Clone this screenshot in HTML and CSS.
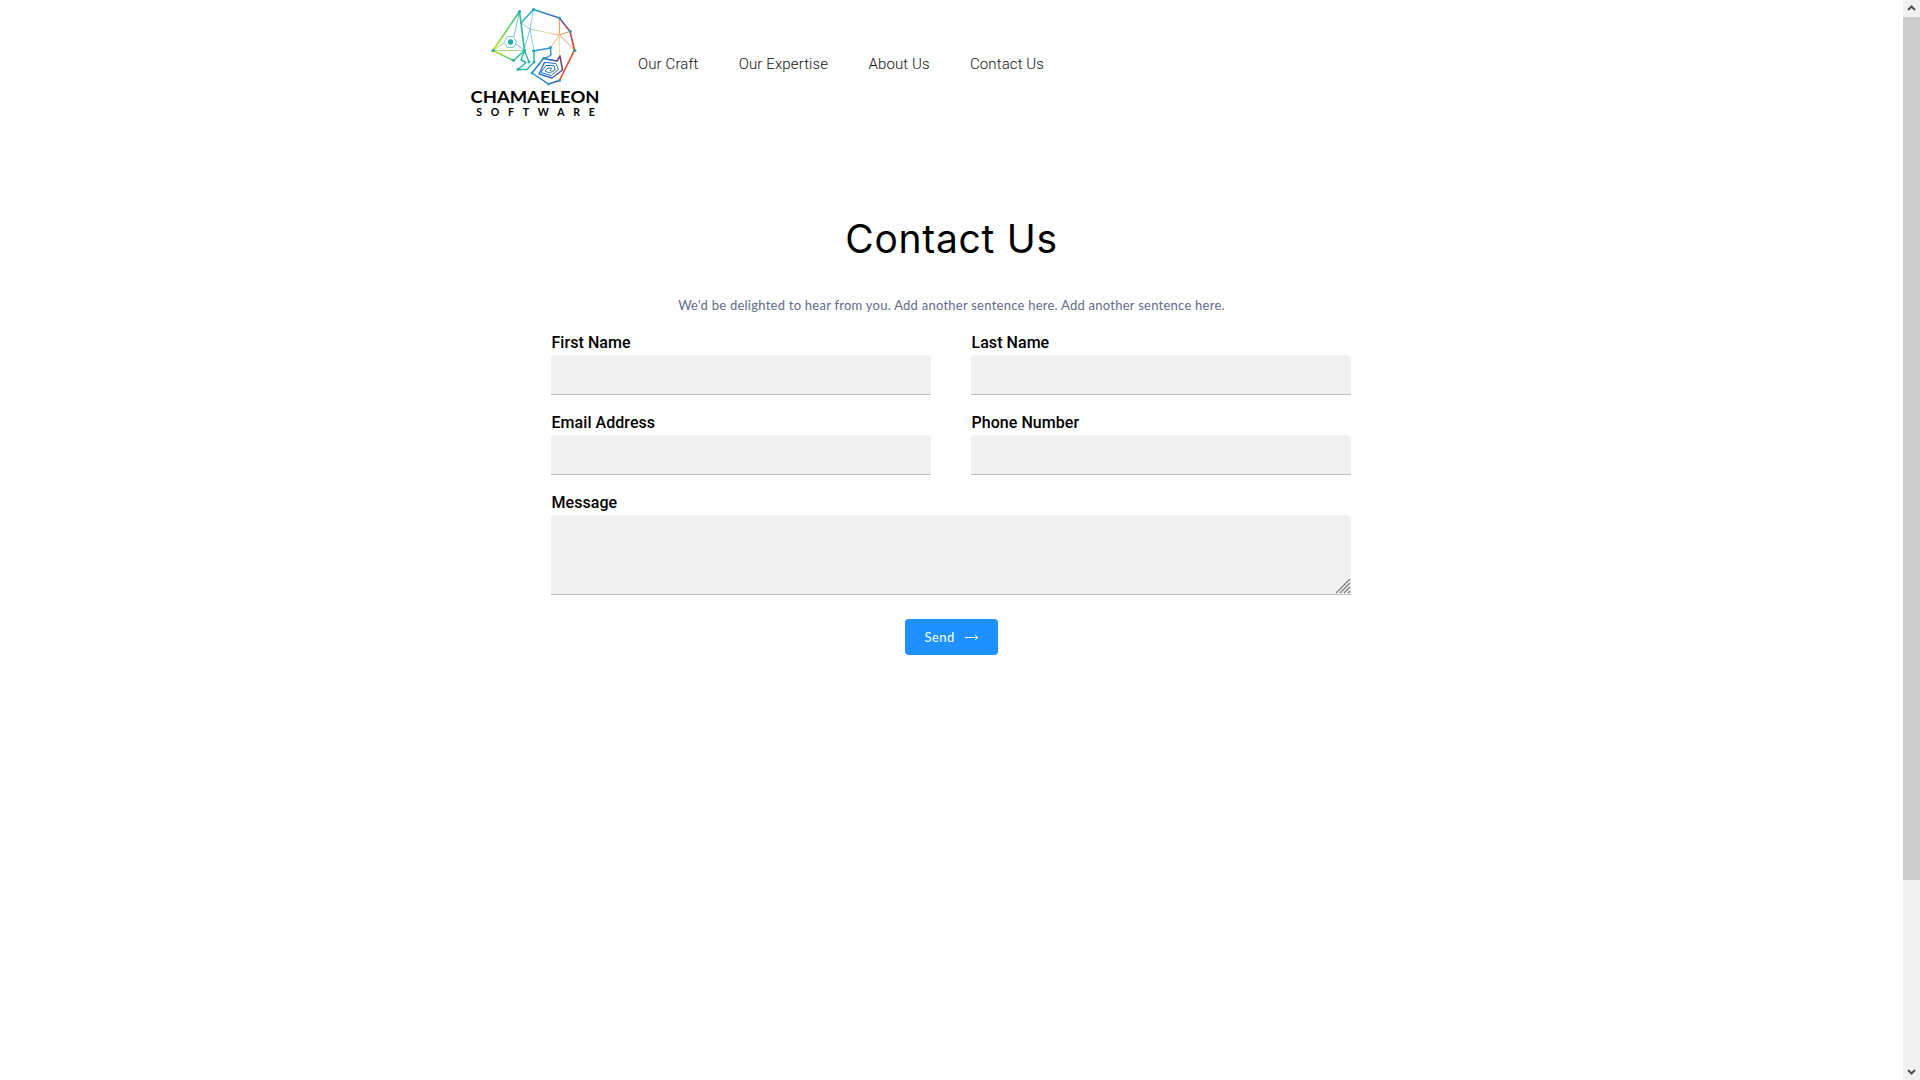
FILE: index.html
```html
<!DOCTYPE html>
<html lang="en">
<head>
<meta charset="utf-8">
<title>Contact Us</title>
<link rel="stylesheet" href="styles.css">
</head>
<body>
<div class="page">
<header class="header">
<svg class="logo" width="130" height="125" viewBox="0 0 130 125">
  <defs>
    <linearGradient id="head" gradientUnits="userSpaceOnUse" x1="22" y1="40" x2="55" y2="40"><stop offset="0" stop-color="#c8e010"/><stop offset=".5" stop-color="#5cd268"/><stop offset="1" stop-color="#1fb59b"/></linearGradient>
    <linearGradient id="back" gradientUnits="userSpaceOnUse" x1="45" y1="10" x2="106" y2="50"><stop offset="0" stop-color="#35c9a3"/><stop offset=".3" stop-color="#2e91dc"/><stop offset=".58" stop-color="#5360ad"/><stop offset=".75" stop-color="#a04450"/><stop offset="1" stop-color="#e2481c"/></linearGradient>
    <linearGradient id="inner" gradientUnits="userSpaceOnUse" x1="56" y1="30" x2="92" y2="36"><stop offset="0" stop-color="#79c5dd"/><stop offset=".6" stop-color="#ece28b"/><stop offset="1" stop-color="#f38b58"/></linearGradient>
    <linearGradient id="tail" gradientUnits="userSpaceOnUse" x1="60" y1="70" x2="93" y2="62"><stop offset="0" stop-color="#1e8fdb"/><stop offset=".6" stop-color="#3b60b6"/><stop offset="1" stop-color="#793b65"/></linearGradient>
  </defs>
  <g transform="translate(-1 0)">
  <g fill="none" stroke-linejoin="round" stroke-linecap="round">
    <path d="M51 23L60 29L63.500 9.500M60 29L64 51M60 29L54 50" stroke="#86c9e3"/>
    <path d="M60 29L89.500 35.200L80.500 47.500M89.500 35L100 31.500M89.500 35L104.500 50" stroke="url(#inner)"/>
    <path d="M89.500 18V35" stroke="#f49a66" stroke-width="1.200"/>
    <path d="M89.500 35V57" stroke="#eae39b" stroke-width="1.200"/>
    <path d="M49.500 11.500L44 36M54 50L46 44" stroke="#82b5e6"/>
    <path d="M23 50.500L49.500 11.500L54.500 50.500L43.500 60.500Z" stroke="url(#head)" stroke-width="1.600"/>
    <path d="M23 50.500L34 43M23 50.500H54" stroke="#9cdc80"/>
    <path d="M34.500 42L37.500 36.500H43.500L46.500 42L43.500 47.500H37.500Z" stroke="#78c6de"/>
    <path d="M51 23L63.500 9.500L89.500 18L100 31.500L104.500 50L89.500 80.500" stroke="url(#back)" stroke-width="1.600"/>
    <path d="M54.500 50.500L59 62M54.500 50.500L51 60L56 62.500L48 69.500H57L64 62V51" stroke="#25b8a3" stroke-width="1.400"/>
    <path d="M63.500 51L80.500 48L81 55L77 57.500L73.500 58" stroke="#2b90d8" stroke-width="1.400"/>
    <path d="M89.500 80.500L78.500 84L62 73L73.500 58.500L87 61L90 56L92.500 70L82 78L69 74L74.500 62.500" stroke="url(#tail)" stroke-width="1.500"/>
    <path d="M74.500 62.500L86 63.500L88.500 69.500L81 75.500L71 72.500L76 65.500H84L85 70L79.500 73L75 71L78 68H81.500L80 71" stroke="#2874c4" stroke-width="1"/>
  </g>
  <g fill="#23a8b1"><circle cx="40.500" cy="42" r="2.700"/><circle cx="23" cy="50.500" r="1.500"/><circle cx="49.500" cy="11.500" r="1.500"/><circle cx="63.500" cy="9.500" r="1.500"/><circle cx="89.500" cy="18" r="1.500"/><circle cx="100.500" cy="31.500" r="1.500"/><circle cx="105" cy="50.500" r="1.500"/><circle cx="54.500" cy="50.500" r="1.400"/><circle cx="43.500" cy="60.500" r="1.400"/><circle cx="59" cy="62" r="1.400"/><circle cx="64" cy="62" r="1.400"/><circle cx="48" cy="69.500" r="1.400"/><circle cx="63.500" cy="51" r="1.400"/><circle cx="80.500" cy="47.500" r="1.500"/><circle cx="73.500" cy="58.500" r="1.400"/><circle cx="62" cy="73" r="1.400"/><circle cx="78.500" cy="84" r="1.500"/><circle cx="89.500" cy="80.500" r="1.500"/></g>
  </g>
  <text class="brand" x="-0.500" y="102.600" textLength="129" lengthAdjust="spacingAndGlyphs">CHAMAELEON</text>
  <text class="brand-sub" x="5.300" y="115.600" textLength="118.500">SOFTWARE</text>
</svg>
<nav class="nav"><a>Our Craft</a><a>Our Expertise</a><a>About Us</a><a>Contact Us</a></nav>
</header>
<main class="contact">
<h1 class="title">Contact Us</h1>
<p class="intro">We'd be delighted to hear from you. Add another sentence here. Add another sentence here.</p>
<form class="form">
<label class="field"><span>First Name</span><input type="text"></label>
<label class="field"><span>Last Name</span><input type="text"></label>
<label class="field"><span>Email Address</span><input type="text"></label>
<label class="field"><span>Phone Number</span><input type="text"></label>
<label class="field wide"><span>Message</span><div class="area"><textarea></textarea><svg class="grip" width="15" height="15" viewBox="0 0 15 15" stroke="#777" stroke-width="1.200"><path d="M0 14L14 0M4 14L14 4M8 14L14 8M12 14L14 12"/></svg></div></label>
<button class="send" type="button"><span>Send</span><svg width="14" height="8" viewBox="0 0 14 8" fill="none" stroke="#fff"><path d="M0 4.500H13M10 2L12.500 4.500L10 7"/></svg></button>
</form>
</main>
</div>
<div class="scrollbar"><svg width="17" height="17" viewBox="0 0 17 17"><path d="M5 10L8.500 6.500L12 10" fill="none" stroke="#505050" stroke-width="2"/></svg><div class="thumb"></div><svg class="down" width="17" height="17" viewBox="0 0 17 17"><path d="M5 7L8.500 10.500L12 7" fill="none" stroke="#505050" stroke-width="2"/></svg></div>
</body>
</html>
```
FILE: styles.css
```css
* { box-sizing: border-box; }
body { margin: 0; height: 1080px; display: flex; overflow: hidden; background: #fff; color: #000; font-family: Lato, sans-serif; }
.page { flex: 1; padding-right: 1px; }
.header { display: flex; height: 125px; padding-left: 471px; }
.logo { flex: none; overflow: visible; }
.brand { font: 700 17px Lato, sans-serif; }
.brand-sub { font: 700 10.5px Lato, sans-serif; }
.nav { display: flex; gap: 40.300px; margin-left: 37px; padding-top: 54px; font: 300 15px/20px Roboto, sans-serif; letter-spacing: 0.110px; color: #111; white-space: nowrap; }
.contact { width: 800px; margin: 0 auto; }
.title { margin: 0; padding: 85px 0 0 1px; font: 400 39px/58px Inter, sans-serif; letter-spacing: 0.700px; text-align: center; }
.intro { margin: 27px 0 0; padding-left: 1px; font-size: 13px; line-height: 20px; letter-spacing: 0.250px; text-align: center; color: #5f6b8c; white-space: nowrap; }
.form { display: grid; grid-template-columns: 1fr 1fr; column-gap: 40px; row-gap: 16px; margin-top: 16px; }
.field { display: block; height: 64px; }
.field span { display: block; height: 24px; padding-left: 0.500px; font: 500 16px/23px Roboto, sans-serif; letter-spacing: 0.050px; }
.field input, .field textarea { display: block; width: 100%; height: 40px; border: 0; border-bottom: 1px solid #bdbdbd; border-radius: 4px 4px 0 0; background: #f1f1f1; resize: none; outline: 0; }
.wide { grid-column: span 2; height: 104px; }
.area { position: relative; }
.field textarea { height: 80px; }
.grip { position: absolute; right: 0; bottom: 1px; }
.send { grid-column: span 2; justify-self: center; display: flex; align-items: center; gap: 10px; width: 93px; height: 36px; margin-top: 8px; padding: 0 18px 0 20px; border: 0; border-radius: 4px; background: #1e90ff; color: #fff; font: 13px Lato, sans-serif; letter-spacing: 0.450px; }
.scrollbar { width: 17px; display: flex; flex-direction: column; background: #f0f0f0; }
.thumb { height: 863px; background: #cdcdcd; }
.down { margin-top: auto; }
```
